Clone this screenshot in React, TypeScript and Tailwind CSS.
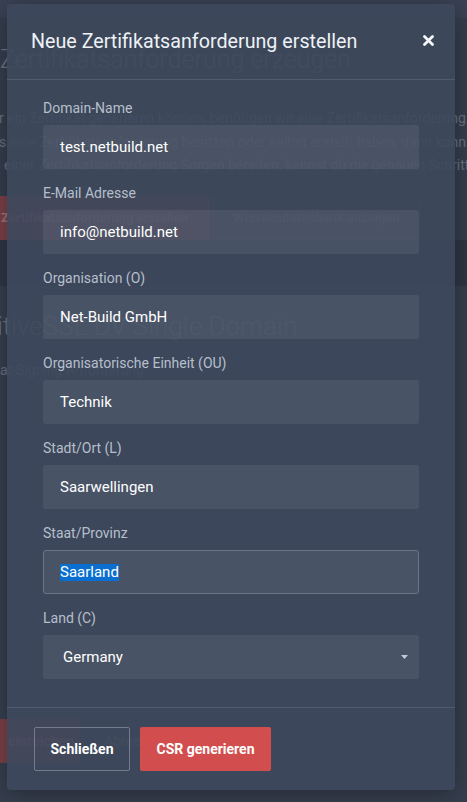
const fields = [
  { label: "Domain-Name", value: "test.netbuild.net" },
  { label: "E-Mail Adresse", value: "info@netbuild.net" },
  { label: "Organisation (O)", value: "Net-Build GmbH" },
  { label: "Organisatorische Einheit (OU)", value: "Technik" },
  { label: "Stadt/Ort (L)", value: "Saarwellingen" },
];

function BackgroundPage() {
  return (
    <div className="flex min-h-[802px] flex-col overflow-hidden bg-[#353d4d] text-[#6a7282]">
      <div className="h-[18px] bg-[#3a4254]" />
      <div className="bg-[#363e4e] pt-[26px]">
        <h1 className="whitespace-nowrap text-[25px] font-light leading-[32px] text-[#6e7686]">
          Zertifikatsanforderung erzeugen
        </h1>
        <div className="mt-[31px] whitespace-nowrap text-[14px] leading-[23.5px]">
          <p className="-ml-[1px]">
            r ein Zertifikat generieren können, benötigen wir eine Zertifikatsanforderung.
          </p>
          <p className="-ml-[1px]">
            s eine Zertifikatsanforderung besitzen oder selbst erstellt haben, dann kannst
          </p>
          <p className="ml-[4px]">
            einer Zertifikatsanforderung Sorgen bereiten, kannst du die genauen Schritte
          </p>
        </div>
        <div className="mt-[18px] flex gap-[3px] whitespace-nowrap text-[13px] font-bold">
          <div className="flex h-[44px] w-[210px] items-center overflow-hidden bg-[#7b4149] pl-[1px] text-[#a27179]">
            Zertifikatsanforderung erstellen
          </div>
          <div className="flex h-[44px] w-[207px] items-center justify-center border border-[#465060] text-[#5d6575]">
            Wissensdatenbank anzeigen
          </div>
        </div>
      </div>
      <div className="h-[46px] bg-[#2f3645]" />
      <div className="flex flex-1 flex-col bg-[#373f4f]">
        <h2 className="-ml-[3px] mt-[24px] whitespace-nowrap text-[26px] font-light leading-[32px] text-[#6e7686]">
          itiveSSL DV Single Domain
        </h2>
        <p className="mt-[18px] whitespace-nowrap text-[14px] leading-[20px]">
          at-Signing-Anforderung
        </p>
        <div className="mb-[39px] mt-auto flex items-center gap-[24px] whitespace-nowrap text-[14px] font-bold">
          <div className="flex h-[44px] w-[80px] items-center justify-end bg-[#7b4149] pr-[6px] text-[#a27179]">
            einreichen
          </div>
          <span className="text-[#5d6575]">Abbrechen</span>
        </div>
      </div>
    </div>
  );
}

function CloseIcon() {
  return (
    <svg width="11" height="11" viewBox="0 0 11 11" aria-hidden>
      <path d="M1.5 1.5 L9.5 9.5 M9.5 1.5 L1.5 9.5" stroke="#f4f6f9" strokeWidth="2.8" strokeLinecap="round" />
    </svg>
  );
}

export default function App() {
  return (
    <div className="relative h-[802px] w-[467px] overflow-hidden font-['Roboto',sans-serif]">
      <BackgroundPage />

      <div className="absolute left-[7px] top-[4px] w-[448px] rounded-[4px] bg-[#3d485c]/[0.9] shadow-[0_4px_24px_rgba(0,0,0,0.35)]">
        <div className="flex items-center justify-between border-b border-[#515b6d] pb-[23px] pl-[24px] pr-[21px] pt-[24px]">
          <h3 className="text-[19.7px] leading-[28px] text-[#eef1f5]">
            Neue Zertifikatsanforderung erstellen
          </h3>
          <button className="-mt-[3px]">
            <CloseIcon />
          </button>
        </div>

        <div className="flex flex-col gap-[14px] px-[36px] pb-[28px] pt-[18px]">
          {fields.map((f) => (
            <div key={f.label} className="flex flex-col">
              <label className="text-[14px] leading-[20px] text-[#b6bfcb]">{f.label}</label>
              <div className="mt-[7px] flex h-[44px] items-center rounded-[3px] bg-white/[0.065] px-[17px] text-[15px] text-white">
                {f.value}
              </div>
            </div>
          ))}

          <div className="flex flex-col">
            <label className="text-[14px] leading-[20px] text-[#b6bfcb]">Staat/Provinz</label>
            <div className="mt-[7px] flex h-[44px] items-center rounded-[3px] border border-[#6c7588] bg-white/[0.065] px-[16px] text-[15px] text-white">
              <span className="bg-[#0a6fd0] leading-[17px]">Saarland</span>
            </div>
          </div>

          <div className="flex flex-col">
            <label className="text-[14px] leading-[20px] text-[#b6bfcb]">Land (C)</label>
            <div className="mt-[7px] flex h-[44px] items-center justify-between rounded-[3px] bg-white/[0.065] pl-[20px] pr-[11px] text-[15px] text-white">
              <span>Germany</span>
              <svg width="7" height="4" viewBox="0 0 7 4" aria-hidden>
                <path d="M0 0 H7 L3.5 4 Z" fill="#c3c9d2" />
              </svg>
            </div>
          </div>
        </div>

        <div className="flex gap-[10px] border-t border-[#515b6d] px-[27px] pb-[19px] pt-[19px]">
          <button className="h-[44px] w-[96px] rounded-[2px] border border-[#737c8d] text-[14px] font-bold text-white">
            Schließen
          </button>
          <button className="h-[44px] w-[131px] rounded-[2px] bg-[#d24e4e] text-[14px] font-bold text-white">
            CSR generieren
          </button>
        </div>
      </div>
    </div>
  );
}
